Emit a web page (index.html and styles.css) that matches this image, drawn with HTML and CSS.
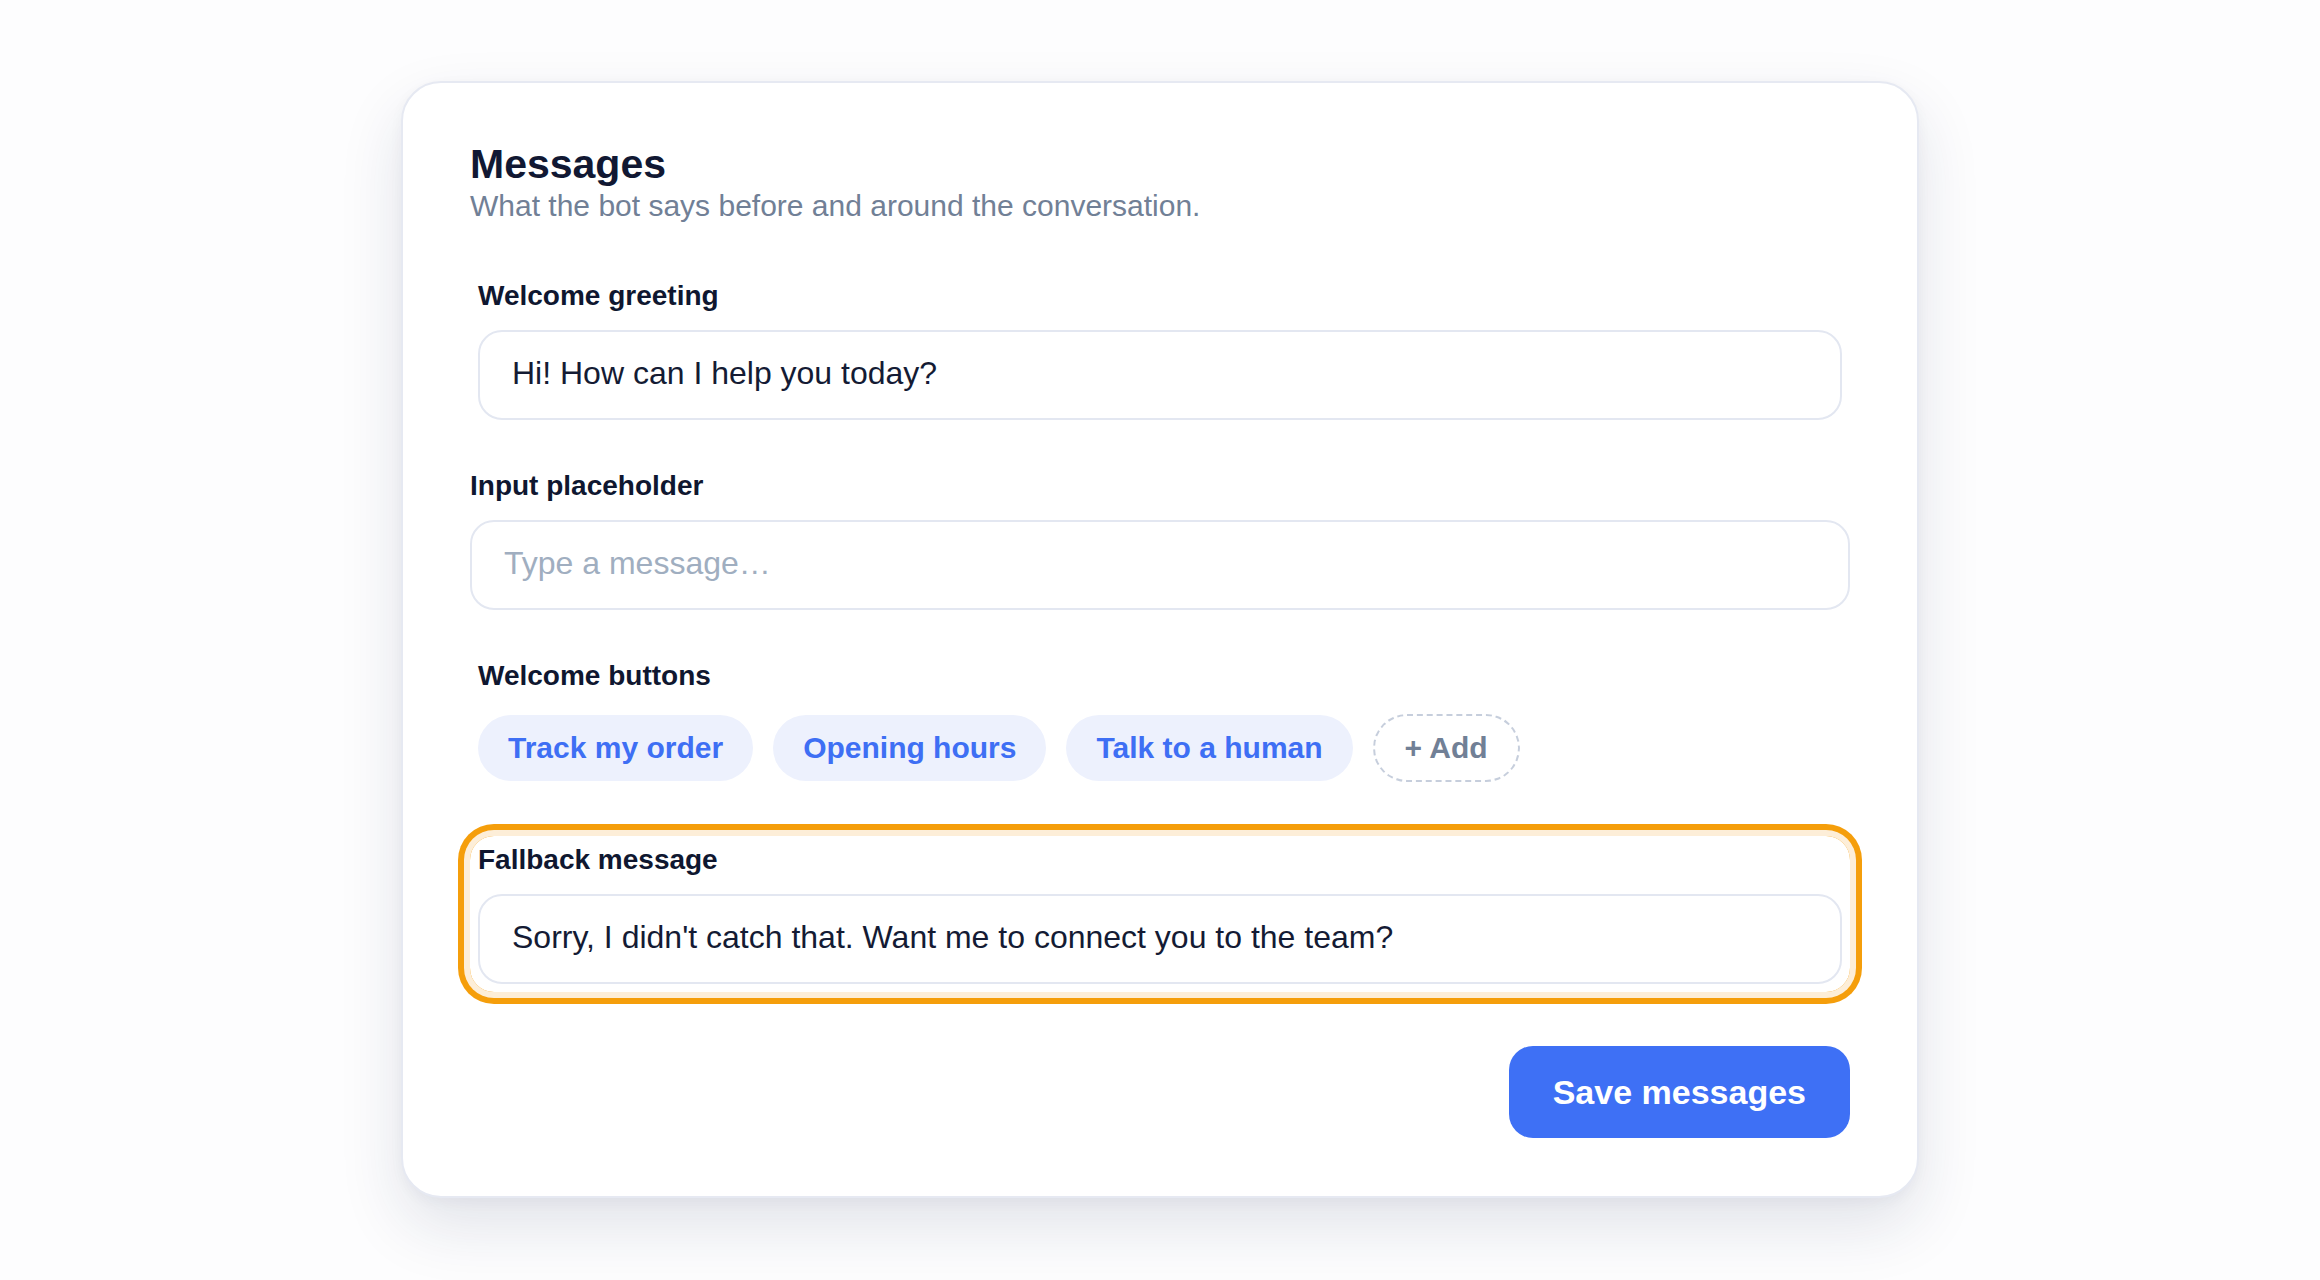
FILE: index.html
```html
<!DOCTYPE html>
<html lang="en">
<head>
<meta charset="utf-8">
<title>Messages</title>
<link rel="stylesheet" href="styles.css">
</head>
<body>
<main class="page">
  <section class="card">
    <header class="card-header">
      <h1 class="title">Messages</h1>
      <p class="subtitle">What the bot says before and around the conversation.</p>
    </header>

    <div class="fields">
      <div class="field">
        <label class="label" for="greeting">Welcome greeting</label>
        <input class="input" id="greeting" type="text" value="Hi! How can I help you today?">
      </div>

      <div class="field field-flush">
        <label class="label" for="placeholder">Input placeholder</label>
        <input class="input" id="placeholder" type="text" placeholder="Type a message…">
      </div>

      <div class="field">
        <div class="label">Welcome buttons</div>
        <div class="chips">
          <button class="chip" type="button">Track my order</button>
          <button class="chip" type="button">Opening hours</button>
          <button class="chip" type="button">Talk to a human</button>
          <button class="chip chip-add" type="button">+ Add</button>
        </div>
      </div>

      <div class="field field-highlight">
        <label class="label" for="fallback">Fallback message</label>
        <input class="input" id="fallback" type="text" value="Sorry, I didn't catch that. Want me to connect you to the team?">
      </div>
    </div>

    <div class="actions">
      <button class="btn-primary" type="button">Save messages</button>
    </div>
  </section>
</main>
</body>
</html>
```

FILE: styles.css
```css
* {
  box-sizing: border-box;
}

html, body {
  margin: 0;
  padding: 0;
}

body {
  background: #fdfdfe;
  font-family: "Liberation Sans", Arial, sans-serif;
  color: #111833;
}

.page {
  display: flex;
  justify-content: center;
  padding-top: 81px;
  min-height: 1280px;
}

.card {
  width: 1518px;
  background: #ffffff;
  border: 2px solid #e6e9f2;
  border-radius: 40px;
  padding: 58px 67px;
  box-shadow: 0 28px 64px rgba(28, 38, 80, 0.12), 0 4px 14px rgba(28, 38, 80, 0.04);
  align-self: flex-start;
}

.card-header {
  margin-bottom: 49px;
}

.title {
  margin: 0;
  font-size: 41px;
  line-height: 47px;
  font-weight: 700;
  color: #111833;
}

.subtitle {
  margin: 1px 0 0;
  font-size: 30px;
  line-height: 34px;
  color: #718096;
}

.fields {
  display: flex;
  flex-direction: column;
  gap: 42px;
}

.field {
  display: flex;
  flex-direction: column;
  padding: 8px;
  border-radius: 24px;
}

.field-flush {
  padding: 0;
}

.field-highlight {
  margin-top: 4px;
  box-shadow: 0 0 0 6px #fdeed8, 0 0 0 12px #f59e0b;
}

.label {
  display: block;
  font-size: 28px;
  line-height: 32px;
  font-weight: 700;
  color: #0f1730;
  margin-bottom: 18px;
}

.input {
  display: block;
  width: 100%;
  height: 90px;
  margin: 0;
  padding: 0 32px 3px;
  border: 2px solid #e3e7f1;
  border-radius: 24px;
  background: #ffffff;
  font-family: "Liberation Sans", Arial, sans-serif;
  font-size: 32px;
  color: #141b34;
  outline: none;
}

.input::placeholder {
  color: #a0aec0;
  opacity: 1;
}

.chips {
  display: flex;
  align-items: center;
  gap: 20px;
  margin-top: 4px;
}

.chip {
  margin: 0;
  padding: 16px 30px;
  border: none;
  border-radius: 999px;
  background: #edf1fd;
  color: #3e6ff4;
  font-family: "Liberation Sans", Arial, sans-serif;
  font-size: 30px;
  line-height: 34px;
  font-weight: 700;
  cursor: pointer;
}

.chip-add {
  padding: 15px 30px;
  background: #ffffff;
  border: 2px dashed #c6cedc;
  color: #718096;
}

.actions {
  display: flex;
  justify-content: flex-end;
  margin-top: 54px;
}

.btn-primary {
  height: 92px;
  margin: 0;
  padding: 0 44px;
  border: none;
  border-radius: 24px;
  background: #3e70f5;
  color: #ffffff;
  font-family: "Liberation Sans", Arial, sans-serif;
  font-size: 34px;
  font-weight: 700;
  cursor: pointer;
}
```
